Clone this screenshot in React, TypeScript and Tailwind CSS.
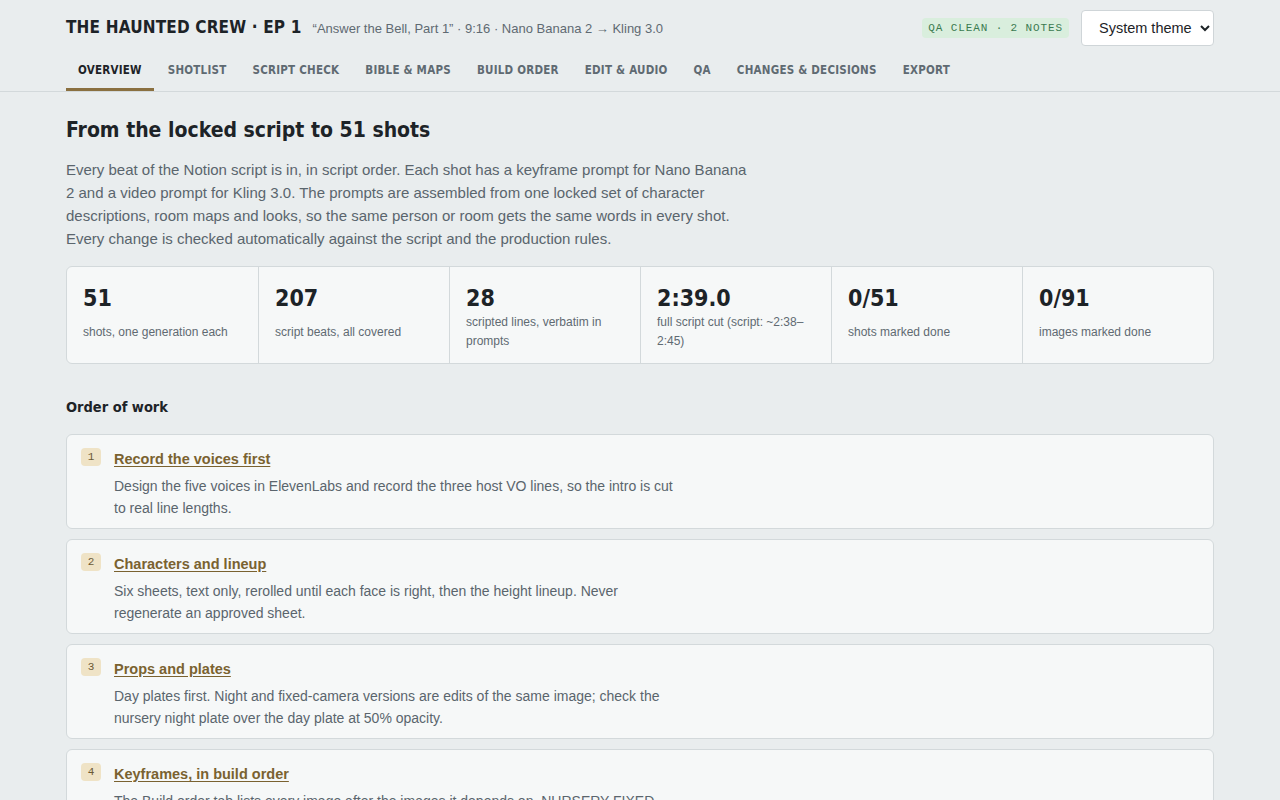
const cond = "font-['DejaVu_Sans_Condensed','DejaVu_Sans',sans-serif] [font-stretch:condensed]";

const tabs = ['Overview', 'Shotlist', 'Script check', 'Bible & maps', 'Build order', 'Edit & audio', 'QA', 'Changes & decisions', 'Export'];

const stats = [
  { value: '51', label: 'shots, one generation each' },
  { value: '207', label: 'script beats, all covered' },
  { value: '28', label: 'scripted lines, verbatim in prompts' },
  { value: '2:39.0', label: 'full script cut (script: ~2:38–2:45)' },
  { value: '0/51', label: 'shots marked done' },
  { value: '0/91', label: 'images marked done' },
];

const steps = [
  {
    title: 'Record the voices first',
    text: 'Design the five voices in ElevenLabs and record the three host VO lines, so the intro is cut to real line lengths.',
  },
  {
    title: 'Characters and lineup',
    text: 'Six sheets, text only, rerolled until each face is right, then the height lineup. Never regenerate an approved sheet.',
  },
  {
    title: 'Props and plates',
    text: 'Day plates first. Night and fixed-camera versions are edits of the same image; check the nursery night plate over the day plate at 50% opacity.',
  },
  {
    title: 'Keyframes, in build order',
    text: 'The Build order tab lists every image after the images it depends on. NURSERY FIXED plates come before the shots that use them.',
  },
];

export default function App() {
  return (
    <div className="min-h-screen bg-[#e9edee] font-['Liberation_Sans',sans-serif] text-[#1d2327]">
      <header className="border-b border-[#d3d9db]">
        <div className="mx-auto w-[1148px]">
          <div className="flex h-[56px] items-center justify-between">
            <div className="flex items-baseline gap-[11px]">
              <h1 className={`${cond} text-[17px] font-bold tracking-[0.01em] text-[#1d2327]`}>THE HAUNTED CREW · EP 1</h1>
              <span className="text-[13px] text-[#5f6a72]">“Answer the Bell, Part 1” · 9:16 · Nano Banana 2 → Kling 3.0</span>
            </div>
            <div className="flex items-center gap-3">
              <span className="rounded-sm bg-[#d9eedd] px-1.5 py-0.5 font-['Liberation_Mono',monospace] text-[11px] tracking-[0.08em] text-[#3b7b50]">
                QA CLEAN · 2 NOTES
              </span>
              <select className="h-9 w-[133px] rounded border border-[#cfd5d8] bg-white pl-[13px] pr-[4px] text-[14.5px] text-[#1d2327]">
                <option>System theme</option>
                <option>Light</option>
                <option>Dark</option>
              </select>
            </div>
          </div>
          <nav className="flex gap-[2px]">
            {tabs.map((t, i) => (
              <button
                key={t}
                className={`${cond} border-b-[3px] px-3 pb-[9px] pt-[6px] text-[11.5px] font-bold uppercase leading-[17px] tracking-[0.02em] ${
                  i === 0 ? 'border-[#8a7040] text-[#1d2327]' : 'border-transparent text-[#5f6a72]'
                }`}
              >
                {t}
              </button>
            ))}
          </nav>
        </div>
      </header>

      <main className="mx-auto w-[1148px] pt-[24px]">
        <h2 className={`${cond} text-[21px] font-bold leading-[28px] text-[#1d2327]`}>From the locked script to 51 shots</h2>
        <p className="mt-[14px] max-w-[690px] text-[15px] leading-[23px] text-[#5a656d]">
          Every beat of the Notion script is in, in script order. Each shot has a keyframe prompt for Nano Banana 2 and a
          video prompt for Kling 3.0. The prompts are assembled from one locked set of character descriptions, room maps and
          looks, so the same person or room gets the same words in every shot. Every change is checked automatically against
          the script and the production rules.
        </p>

        <div className="mt-[16px] grid grid-cols-6 overflow-hidden rounded-md border border-[#d3d9db] bg-[#f6f8f8]">
          {stats.map((s, i) => (
            <div key={s.value} className={`h-[96px] px-4 pt-[15px] ${i > 0 ? 'border-l border-[#d3d9db]' : ''}`}>
              <div className={`${cond} text-[23px] font-bold leading-[32px] text-[#1d2327]`}>{s.value}</div>
              <div className={`text-[12px] leading-[19px] text-[#5f6a72] ${s.label.length > 28 ? 'mt-[-1px]' : 'mt-[9px]'}`}>
                {s.label}
              </div>
            </div>
          ))}
        </div>

        <h3 className={`${cond} mt-[32px] text-[14.5px] font-bold leading-[22px] text-[#1d2327]`}>Order of work</h3>

        <div className="mt-[16px] flex flex-col gap-[10px]">
          {steps.map((s, i) => (
            <div key={s.title} className="flex gap-[13px] rounded-md border border-[#d3d9db] bg-[#f6f8f8] px-[14px] pb-[9px] pt-[13px]">
              <span className="flex h-[18px] w-[20px] shrink-0 items-center justify-center rounded-sm bg-[#efe3c6] font-['Liberation_Mono',monospace] text-[11px] text-[#6b5a35]">
                {i + 1}
              </span>
              <div className="leading-[22px]">
                <a href="#" className="block w-fit text-[14.5px] font-bold leading-[22px] text-[#7a6230] underline underline-offset-2">
                  {s.title}
                </a>
                <p className="mt-[5px] max-w-[570px] text-[14px] leading-[22px] text-[#5a656d]">{s.text}</p>
              </div>
            </div>
          ))}
        </div>
      </main>
    </div>
  );
}
